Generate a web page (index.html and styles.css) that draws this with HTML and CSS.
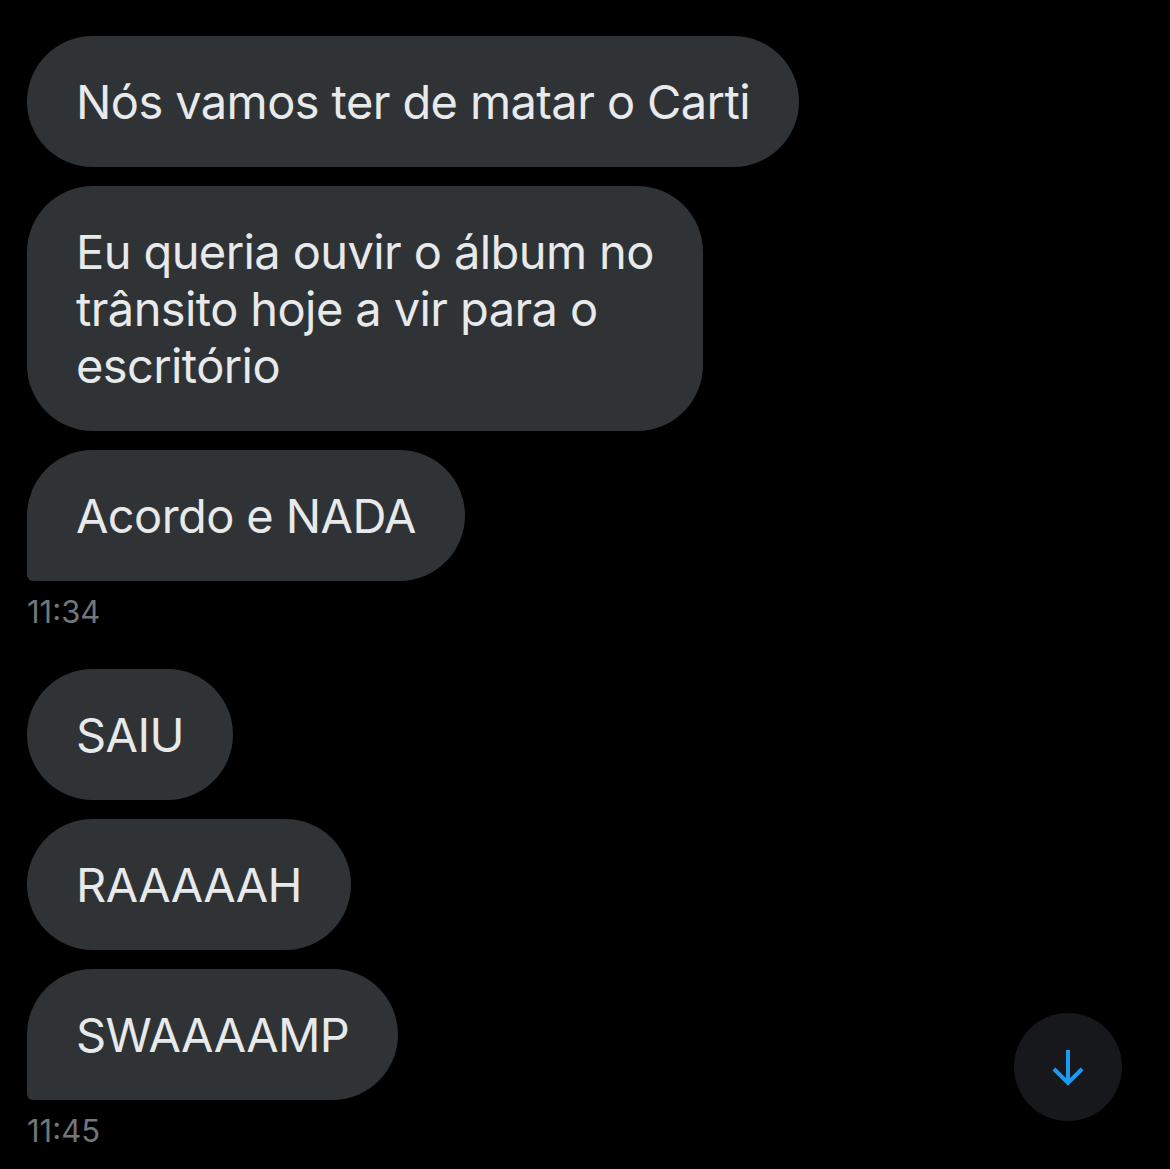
FILE: index.html
```html
<!DOCTYPE html>
<html lang="pt-br">
<head>
    <meta charset="UTF-8">
    <meta name="viewport" content="width=device-width, initial-scale=1.0">
    <title>Mensagens</title>
    <link rel="stylesheet" href="styles.css">
</head>
<body>
    <div class="chat">
        <div class="group">
            <div class="bubble">Nós vamos ter de matar o Carti</div>
            <div class="bubble">Eu queria ouvir o álbum no<br>trânsito hoje a vir para o<br>escritório</div>
            <div class="bubble last">Acordo e NADA</div>
            <div class="time">11:34</div>
        </div>
        <div class="group">
            <div class="bubble">SAIU</div>
            <div class="bubble">RAAAAAH</div>
            <div class="bubble last">SWAAAAMP</div>
            <div class="time">11:45</div>
        </div>
    </div>

    <button class="scroll-down" aria-label="Ir para o fim">
        <svg width="36" height="40" viewBox="0 0 36 40" fill="none" stroke="#1d9bf0" stroke-width="4">
            <path d="M18 3 V35"/>
            <path d="M4 22 L18 36 L32 22"/>
        </svg>
    </button>
</body>
</html>
```

FILE: styles.css
```css
body {
    margin: 0;
    background: #000;
    color: #e7e9ea;
    font-family: Inter, "Noto Sans", sans-serif;
    height: 100vh;
    overflow: hidden;
}
.chat {
    display: flex;
    flex-direction: column;
    gap: 37px;
    padding: 36px 0 0 27px;
}
.group {
    display: flex;
    flex-direction: column;
    align-items: flex-start;
    gap: 19px;
}
.bubble {
    background: #2f3336;
    border-radius: 66px;
    padding: 37px 49px;
    font-size: 47px;
    line-height: 57px;
    letter-spacing: -0.6px;
    white-space: nowrap;
}
.bubble.last {
    border-bottom-left-radius: 6px;
}
.time {
    margin-top: -8px;
    font-size: 31px;
    line-height: 40px;
    color: #71767b;
}
.scroll-down {
    position: absolute;
    left: 1014px;
    top: 1013px;
    width: 108px;
    height: 108px;
    border-radius: 50%;
    border: none;
    background: #16181c;
    display: flex;
    align-items: center;
    justify-content: center;
    padding: 0;
}
```
